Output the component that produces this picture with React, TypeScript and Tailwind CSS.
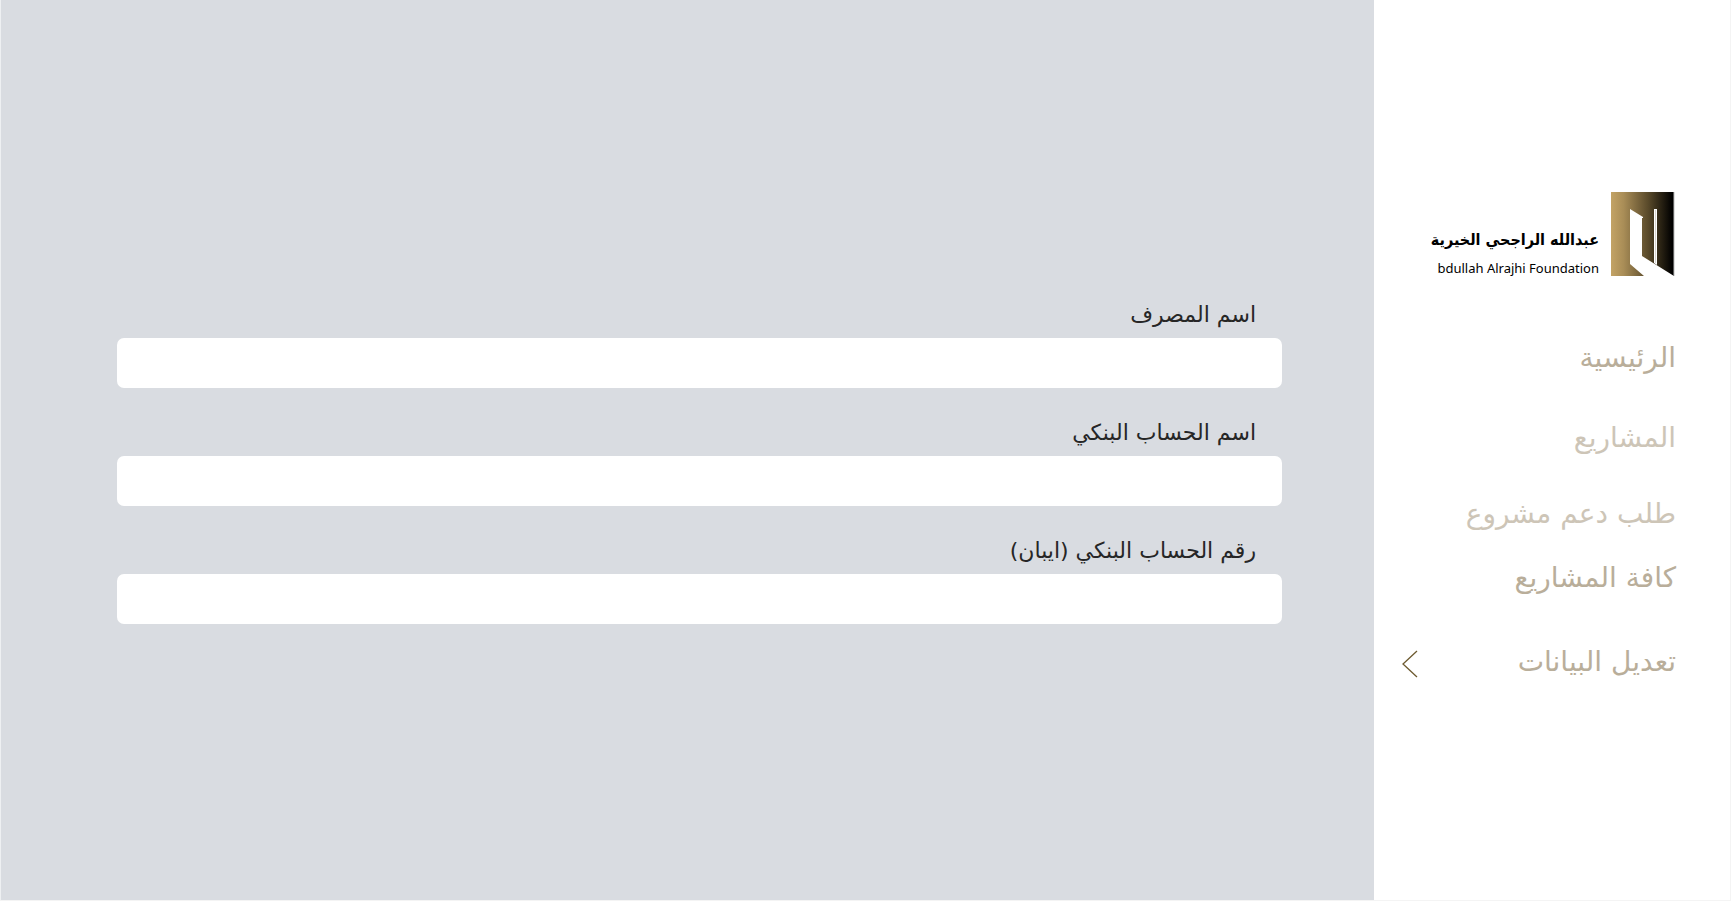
interface NavItem {
  label: string;
  className: string;
  isActive?: boolean;
}

const navItems: NavItem[] = [
  { label: "الرئيسية", className: "h-20 text-[#b9ae9a]" },
  { label: "المشاريع", className: "h-19 text-[#cdc5b7]" },
  { label: "طلب دعم مشروع", className: "h-16 text-[#cdc5b7]" },
  { label: "كافة المشاريع", className: "h-21 text-[#b9ae9a]" },
  { label: "تعديل البيانات", className: "h-20 text-[#b9ae9a]", isActive: true },
];

const fields = [
  { id: "bankName", label: "اسم المصرف" },
  { id: "accountName", label: "اسم الحساب البنكي" },
  { id: "iban", label: "رقم الحساب البنكي (ايبان)" },
];

function Logo() {
  return (
    <div className="flex items-end gap-3">
      <svg width="65" height="84" viewBox="0 0 65 84" className="shrink-0">
        <defs>
          <linearGradient id="door" x1="0" y1="0" x2="1" y2="0">
            <stop offset="0" stopColor="#c3a365" />
            <stop offset="0.2" stopColor="#a98d57" />
            <stop offset="0.6" stopColor="#574829" />
            <stop offset="0.97" stopColor="#000000" />
          </linearGradient>
        </defs>
        <rect width="63" height="84" fill="url(#door)" />
        <path d="M19 17 L32 25 V26 H31 V64 L63 84 H33 L19 72 Z" fill="#fff" />
        <path d="M43 17 H46 V73 L43 71 Z" fill="#fff" />
        <path d="M44.5 18 V71" stroke="#d9d6cf" strokeWidth="1" />
        <path d="M63 0 V84" stroke="#bdbdbd" strokeWidth="1" />
      </svg>
      <div className="flex flex-col items-start whitespace-nowrap text-black">
        <span className="font-['DejaVu_Sans_Condensed','DejaVu_Sans'] text-[16px] leading-10 font-bold">
          عبدالله الراجحي الخيرية
        </span>
        <span dir="ltr" className="font-['Noto_Sans'] text-[13px] leading-4">
          bdullah Alrajhi Foundation
        </span>
      </div>
    </div>
  );
}

function Sidebar() {
  return (
    <aside className="w-[357px] shrink-0 border-r border-[#f4f4f4] bg-white pt-48 pr-[54px]">
      <Logo />
      <nav className="mt-16 flex flex-col">
        {navItems.map((item) => (
          <div key={item.label} className={item.className}>
            <a
              href="#"
              className="flex items-center justify-between pl-7 text-[28px] leading-9 whitespace-nowrap"
            >
              {item.label}
              {item.isActive && (
                <svg width="16" height="32" viewBox="0 0 16 32" fill="none">
                  <path d="M15 5 L1 18 L15 31" stroke="#6d5a30" strokeWidth="1.3" />
                </svg>
              )}
            </a>
          </div>
        ))}
      </nav>
    </aside>
  );
}

export default function App() {
  return (
    <div
      dir="rtl"
      className="flex min-h-screen border-b border-[#f4f4f4] bg-white font-['DejaVu_Sans',sans-serif]"
    >
      <Sidebar />
      <main className="flex-1 border-l border-[#eef0f2] bg-[#d9dce1] pt-[298px] pr-[92px] pl-29">
        <form className="flex flex-col gap-7">
          {fields.map((field) => (
            <div key={field.id} className="flex flex-col">
              <label
                htmlFor={field.id}
                className="h-10 px-[26px] text-[22px] leading-[34px] text-[#262626]"
              >
                {field.label}
              </label>
              <input
                id={field.id}
                type="text"
                className="h-[50px] w-full rounded-[7px] bg-white px-4 text-lg outline-none"
              />
            </div>
          ))}
        </form>
      </main>
    </div>
  );
}
